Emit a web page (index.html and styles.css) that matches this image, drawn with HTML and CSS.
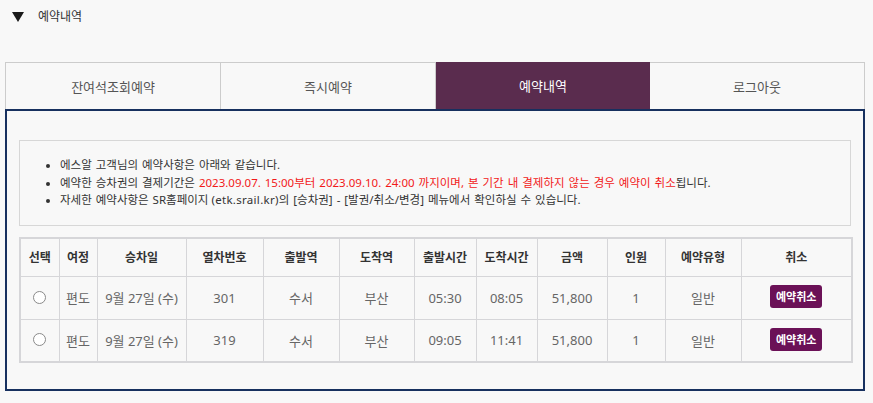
FILE: index.html
```html
<!DOCTYPE html>
<html lang="ko">
<head>
<meta charset="utf-8">
<title>예약내역</title>
<link rel="stylesheet" href="styles.css">
</head>
<body>
<div class="page">
  <div class="title">
    <svg class="tri" width="12" height="10" viewBox="0 0 12 10"><polygon points="0,0 12,0 6,10" fill="#1a1a1a"/></svg>
    <span>예약내역</span>
  </div>
  <div class="tabs">
    <div class="tab">잔여석조회예약</div>
    <div class="tab">즉시예약</div>
    <div class="tab active">예약내역</div>
    <div class="tab">로그아웃</div>
  </div>
  <div class="panel">
    <div class="info">
      <ul>
        <li>에스알 고객님의 예약사항은 아래와 같습니다.</li>
        <li>예약한 승차권의 결제기간은 <span class="red">2023.09.07. 15:00부터 2023.09.10. 24:00 까지이며, 본 기간 내 결제하지 않는 경우 예약이 취소</span>됩니다.</li>
        <li>자세한 예약사항은 SR홈페이지<span class="lat">(etk.srail.kr)</span>의 [승차권] - [발권/취소/변경] 메뉴에서 확인하실 수 있습니다.</li>
      </ul>
    </div>
    <table class="list">
      <colgroup>
        <col class="c1"><col class="c2"><col class="c3"><col class="c4"><col class="c5"><col class="c6"><col class="c7"><col class="c8"><col class="c9"><col class="c10"><col class="c11"><col class="c12">
      </colgroup>
      <thead>
        <tr><th>선택</th><th>여정</th><th>승차일</th><th>열차번호</th><th>출발역</th><th>도착역</th><th>출발시간</th><th>도착시간</th><th>금액</th><th>인원</th><th>예약유형</th><th>취소</th></tr>
      </thead>
      <tbody>
        <tr><td><span class="radio"></span></td><td>편도</td><td>9월 27일 (수)</td><td>301</td><td>수서</td><td>부산</td><td>05:30</td><td>08:05</td><td>51,800</td><td>1</td><td>일반</td><td><span class="btn">예약취소</span></td></tr>
        <tr><td><span class="radio"></span></td><td>편도</td><td>9월 27일 (수)</td><td>319</td><td>수서</td><td>부산</td><td>09:05</td><td>11:41</td><td>51,800</td><td>1</td><td>일반</td><td><span class="btn">예약취소</span></td></tr>
      </tbody>
    </table>
  </div>
</div>
</body>
</html>
```

FILE: styles.css
```css
* { box-sizing: border-box; }
html, body { margin: 0; padding: 0; background: #f8f8f8; }
body { font-family: "Noto Sans", "Noto Sans CJK KR", sans-serif; color: #333; }
.page { padding: 0 8px 12px 5px; }
.title { height: 62px; display: flex; align-items: flex-start; padding-top: 8px; padding-left: 7px; font-size: 12px; color: #333; }
.title .tri { margin-top: 4px; margin-right: 14px; }
.title span { line-height: 18px; }
.tabs { display: flex; width: 860px; height: 47px; border: 1px solid #cccccc; border-bottom: none; }
.tab { flex: 1; display: flex; align-items: center; justify-content: center; font-size: 13px; color: #555; border-right: 1px solid #cccccc; }
.tab:last-child { border-right: none; }
.tab.active { background: #5a2c4e; color: #fff; margin-top: -1px; border-right: none; }
.panel { width: 860px; border: 2px solid #17305f; padding: 29px 12px 26px 12px; }
.info { border: 1px solid #d7d7d7; padding: 15px 10px 16px 0; height: 86px; }
.info ul { margin: 0; padding-left: 40px; font-size: 11.5px; line-height: 17.5px; color: #333; word-spacing: 1px; }
.info li::marker { font-size: 10px; }
.lat { padding-left: 3px; letter-spacing: 0.3px; }
.red { color: #f21a1a; }
.list { margin-top: 11px; width: 832px; border-collapse: collapse; table-layout: fixed; border: 2px solid #d6d6d9; }
.c1 { width: 39px; } .c2 { width: 38px; } .c3 { width: 89px; } .c4 { width: 77px; }
.c5 { width: 76px; } .c6 { width: 75px; } .c7 { width: 62px; } .c8 { width: 61px; }
.c9 { width: 70px; } .c10 { width: 58px; } .c11 { width: 76px; } .c12 { width: 111px; }
.list th, .list td { border: 1px solid #d6d6d9; text-align: center; padding: 0; white-space: nowrap; }
.list th { height: 38px; font-size: 12px; font-weight: bold; color: #333; }
.list td { height: 43px; font-size: 13px; color: #666; }
.radio { display: inline-block; width: 13px; height: 13px; border: 1px solid #8a8a8a; border-radius: 50%; background: #fff; vertical-align: middle; margin-top: -4px; }
.btn { display: inline-block; width: 52px; height: 23px; line-height: 23px; background: #6b1157; color: #fff; font-size: 11px; font-weight: bold; border-radius: 3px; vertical-align: middle; margin-top: -2px; }
```
